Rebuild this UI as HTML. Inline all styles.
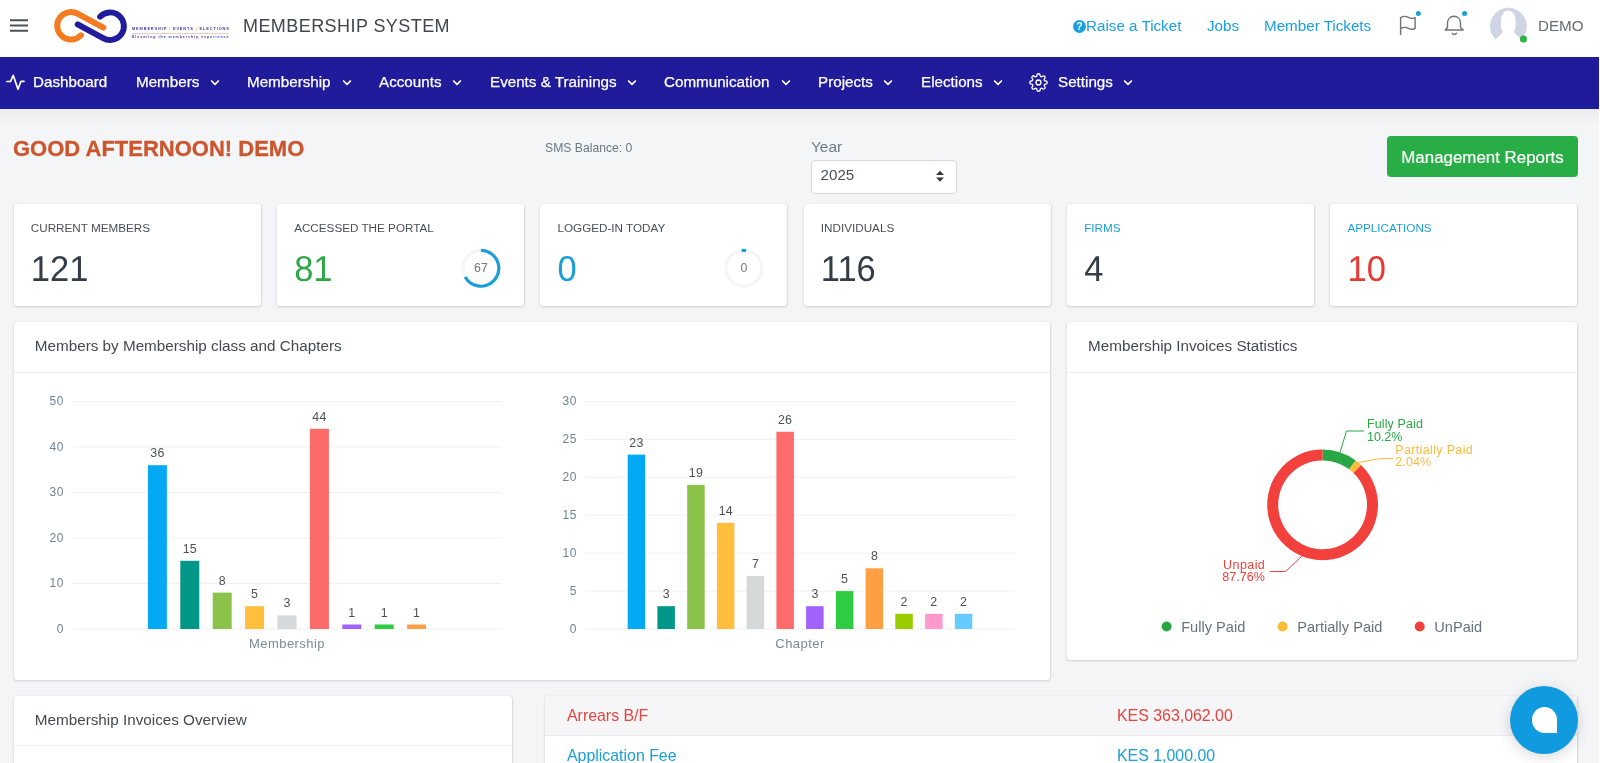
<!DOCTYPE html>
<html lang="en">
<head>
<meta charset="utf-8">
<title>Membership System</title>
<style>
*{box-sizing:border-box;margin:0;padding:0}
html,body{width:1600px;height:763px;overflow:hidden;background:#fff}
body{font-family:"Liberation Sans",Arial,sans-serif;color:#323a46;position:relative}
#page{position:absolute;left:0;top:0;width:1599px;height:763px;background:#f4f5f7;overflow:hidden;will-change:transform}
.abs{position:absolute;white-space:nowrap}
/* header */
#topbar{position:absolute;left:0;top:0;width:1599px;height:57px;background:#fff}
#nav{position:absolute;left:0;top:57px;width:1599px;height:51.5px;background:#1f1b9b}
#nav .it{position:absolute;top:0;height:52px;line-height:49px;color:#fff;font-size:15.2px;white-space:nowrap;-webkit-text-stroke:0.25px #fff}
#nav svg{position:absolute}
.toplink{position:absolute;top:17px;font-size:15.2px;color:#1a9fe0;white-space:nowrap;line-height:18px}
/* cards */
.card{position:absolute;background:#fff;border-radius:3px;box-shadow:0 1px 2.5px rgba(35,40,55,.16),.5px 0 1.5px rgba(35,40,55,.07)}
.stat .lbl{position:absolute;left:17.3px;top:17.1px;font-size:11.7px;color:#3e4650;white-space:nowrap;line-height:14px}
.stat .num{position:absolute;left:17.3px;top:45.9px;font-size:34.5px;line-height:40px;color:#343c46;font-weight:400;white-space:nowrap;transform:scaleY(1.04);transform-origin:0 31.4px;text-rendering:geometricPrecision}
.ctitle{position:absolute;left:21.3px;top:15.2px;font-size:15.25px;line-height:18px;color:#434a52;white-space:nowrap}
.chead{position:absolute;left:0;top:0;right:0;height:51px;border-bottom:1px solid #eff0f3}
</style>
</head>
<body>
<div id="page">

<!-- TOP BAR -->
<div id="topbar">
  <svg class="abs" style="left:10px;top:18px" width="18" height="15" viewBox="0 0 18 15">
    <g stroke="#4b5259" stroke-width="1.9" fill="none"><path d="M0 2.3H18M0 7.5H18M0 12.8H18"/></g>
  </svg>
  <!-- logo -->
  <svg class="abs" style="left:45px;top:0" width="195" height="56" viewBox="45 0 195 56">
    <g fill="none" stroke-width="5.9" stroke-linecap="round" stroke-linejoin="round">
      <path d="M103.4 27.7L78 13.9A13.8 13.8 0 1 0 81 35.3" stroke="#f47b20"/>
      <path d="M77.7 24.3L103.1 38.1A13.8 13.8 0 1 0 100.1 16.7" stroke="#211c9c"/>
    </g>
    <text x="132" y="30.4" font-family="Liberation Sans, sans-serif" font-size="3.9" font-weight="700" fill="#3d37a3" textLength="96.9">MEMBERSHIP <tspan fill="#f3b27a">|</tspan> EVENTS <tspan fill="#f3b27a">|</tspan> ELECTIONS</text>
    <path d="M132 33.3H229" stroke="#f6c79f" stroke-width="0.6"/><path d="M132 33.3H229" stroke="#6a5f8f" stroke-width="0.5" stroke-dasharray="1.4 1.1" opacity=".7"/>
    <text x="132" y="38.2" font-family="Liberation Sans, sans-serif" font-size="3.5" font-weight="700" fill="#3d37a3" textLength="96.4">Elevating the membership experience</text>
  </svg>
  <div class="abs" style="left:243px;top:15px;font-size:18px;letter-spacing:.43px;line-height:22px;color:#3f464e">MEMBERSHIP SYSTEM</div>

  <div class="toplink" style="left:1073px"><span style="display:inline-block;width:13px;height:13px;border-radius:50%;background:#1a9fe0;color:#fff;font-size:10.5px;font-weight:700;line-height:13px;text-align:center;vertical-align:1px">?</span>Raise a Ticket</div>
  <div class="toplink" style="left:1207px">Jobs</div>
  <div class="toplink" style="left:1264px">Member Tickets</div>

  <!-- flag -->
  <svg class="abs" style="left:1396px;top:8px" width="30" height="32" viewBox="0 0 30 32">
    <path d="M4.6 26.4V9.6C7.6 8 10.4 8.2 12.4 9.4C14.8 10.8 17.2 10.6 19.1 9.7V20.4C17 21.6 14.6 21.5 12.4 20.3C10.4 19.2 7.6 19 4.6 20.7" fill="none" stroke="#6c7278" stroke-width="1.4" stroke-linecap="round" stroke-linejoin="round"/>
    <circle cx="22.3" cy="5.6" r="2.5" fill="#1ba1d0"/>
  </svg>
  <!-- bell -->
  <svg class="abs" style="left:1440px;top:8px" width="32" height="32" viewBox="0 0 32 32">
    <g fill="none" stroke="#6c7278" stroke-width="1.4" stroke-linecap="round" stroke-linejoin="round">
    <path d="M5.2 22L7.5 19.6V15C7.5 11 10.2 8.3 14 8.3C17.8 8.3 20.5 11 20.5 15V19.6L23.2 22Z"/>
    <path d="M12.2 25.3C13.1 26.8 15.5 26.8 16.4 25.3"/>
    </g>
    <circle cx="24.6" cy="5.6" r="2.5" fill="#1ba1d0"/>
  </svg>
  <!-- avatar -->
  <svg class="abs" style="left:1488px;top:6px" width="42" height="46" viewBox="0 0 42 46">
    <circle cx="20.4" cy="20.2" r="18.4" fill="#d0d5e6"/>
    <path d="M13 14A7.3 9.5 0 0 1 27.6 14V21C27.6 23.5 26 24.4 26 25.5C26 26.5 26.5 27 27.3 27.8L36.5 36.5V46H4.5V36.5L13.3 27.8C14.1 27 14.6 26.5 14.6 25.5C14.6 24.4 13 23.5 13 21Z" fill="#fff"/>
    <circle cx="35.4" cy="33" r="3.5" fill="#2fb344"/>
  </svg>
  <div class="abs" style="left:1538px;top:17px;font-size:15.2px;line-height:18px;color:#666d74">DEMO</div>
</div>

<!-- NAV -->
<div id="nav">
  <svg style="left:5px;top:15px" width="22" height="20" viewBox="0 0 22 20"><path d="M1.9 9.5H5.5L8.2 3.3L13 17.2L16 9.3H19" fill="none" stroke="#fff" stroke-width="1.7" stroke-linecap="round" stroke-linejoin="round"/></svg>
  <div class="it" style="left:33px">Dashboard</div>
  <div class="it" style="left:136px">Members</div>
  <div class="it" style="left:247px">Membership</div>
  <div class="it" style="left:379px">Accounts</div>
  <div class="it" style="left:490px">Events &amp; Trainings</div>
  <div class="it" style="left:664px">Communication</div>
  <div class="it" style="left:818px">Projects</div>
  <div class="it" style="left:921px">Elections</div>
  <div class="it" style="left:1058px">Settings</div>
<svg style="left:209.0px;top:19.6px" width="12" height="12" viewBox="0 0 12 12"><path d="M2.6 4L6 7.4L9.4 4" fill="none" stroke="#fff" stroke-width="1.7" stroke-linecap="round" stroke-linejoin="round"/></svg><svg style="left:340.8px;top:19.6px" width="12" height="12" viewBox="0 0 12 12"><path d="M2.6 4L6 7.4L9.4 4" fill="none" stroke="#fff" stroke-width="1.7" stroke-linecap="round" stroke-linejoin="round"/></svg><svg style="left:450.7px;top:19.6px" width="12" height="12" viewBox="0 0 12 12"><path d="M2.6 4L6 7.4L9.4 4" fill="none" stroke="#fff" stroke-width="1.7" stroke-linecap="round" stroke-linejoin="round"/></svg><svg style="left:625.9px;top:19.6px" width="12" height="12" viewBox="0 0 12 12"><path d="M2.6 4L6 7.4L9.4 4" fill="none" stroke="#fff" stroke-width="1.7" stroke-linecap="round" stroke-linejoin="round"/></svg><svg style="left:779.6px;top:19.6px" width="12" height="12" viewBox="0 0 12 12"><path d="M2.6 4L6 7.4L9.4 4" fill="none" stroke="#fff" stroke-width="1.7" stroke-linecap="round" stroke-linejoin="round"/></svg><svg style="left:881.6px;top:19.6px" width="12" height="12" viewBox="0 0 12 12"><path d="M2.6 4L6 7.4L9.4 4" fill="none" stroke="#fff" stroke-width="1.7" stroke-linecap="round" stroke-linejoin="round"/></svg><svg style="left:991.5px;top:19.6px" width="12" height="12" viewBox="0 0 12 12"><path d="M2.6 4L6 7.4L9.4 4" fill="none" stroke="#fff" stroke-width="1.7" stroke-linecap="round" stroke-linejoin="round"/></svg><svg style="left:1121.6px;top:19.6px" width="12" height="12" viewBox="0 0 12 12"><path d="M2.6 4L6 7.4L9.4 4" fill="none" stroke="#fff" stroke-width="1.7" stroke-linecap="round" stroke-linejoin="round"/></svg><svg style="left:1029.2px;top:15.9px" width="19" height="19" viewBox="0 0 24 24"><g fill="none" stroke="#fff" stroke-width="1.7" stroke-linecap="round" stroke-linejoin="round"><circle cx="12" cy="12" r="3.1"/><path d="M19.4 15a1.65 1.65 0 0 0 .33 1.82l.06.06a2 2 0 1 1-2.83 2.83l-.06-.06a1.65 1.65 0 0 0-1.82-.33 1.65 1.65 0 0 0-1 1.51V21a2 2 0 1 1-4 0v-.09A1.65 1.65 0 0 0 9 19.4a1.65 1.65 0 0 0-1.82.33l-.06.06a2 2 0 1 1-2.83-2.83l.06-.06a1.65 1.65 0 0 0 .33-1.82 1.65 1.65 0 0 0-1.51-1H3a2 2 0 1 1 0-4h.09A1.65 1.65 0 0 0 4.6 9a1.65 1.65 0 0 0-.33-1.82l-.06-.06a2 2 0 1 1 2.83-2.83l.06.06a1.65 1.65 0 0 0 1.82.33H9a1.65 1.65 0 0 0 1-1.51V3a2 2 0 1 1 4 0v.09a1.65 1.65 0 0 0 1 1.51 1.65 1.65 0 0 0 1.82-.33l.06-.06a2 2 0 1 1 2.83 2.83l-.06.06a1.65 1.65 0 0 0-.33 1.82V9a1.65 1.65 0 0 0 1.51 1H21a2 2 0 1 1 0 4h-.09a1.65 1.65 0 0 0-1.51 1z"/></g></svg></div>

<div style="position:absolute;left:0;top:108.5px;width:1599px;height:16px;background:linear-gradient(rgba(40,40,60,.045),rgba(40,40,60,0))"></div>

<div class="abs" style="left:13px;top:136.7px;font-size:22px;line-height:24px;font-weight:700;color:#cb562e;-webkit-text-stroke:.3px #cb562e;transform:scaleY(1.035);transform-origin:0 19.3px">GOOD AFTERNOON! DEMO</div>
<div class="abs" style="left:545px;top:141px;font-size:12.2px;line-height:14px;color:#6b7884">SMS Balance: 0</div>
<div class="abs" style="left:811px;top:137.5px;font-size:15.4px;line-height:18px;color:#6a7d8a">Year</div>
<div class="abs" style="left:811px;top:159.5px;width:145.5px;height:34px;background:#fff;border:1px solid #d3d9df;border-radius:4px">
  <div class="abs" style="left:8.5px;top:5px;font-size:15.2px;line-height:18px;color:#495057">2025</div>
  <svg class="abs" style="left:122.5px;top:9.5px" width="10" height="13" viewBox="0 0 10 13"><path d="M1 5L5 0.8L9 5ZM1 7.6L5 11.8L9 7.6Z" fill="#343a40"/></svg>
</div>
<div class="abs" style="left:1387px;top:136px;width:191px;height:41px;background:#29ad46;border-radius:4px;color:#fff;font-size:16.9px;line-height:43.4px;-webkit-text-stroke:.2px #fff;text-align:center">Management Reports</div>

<div class="card stat" style="left:13.50px;top:204.2px;width:247.3px;height:102.2px"><div class="lbl" style="color:#484f57">CURRENT MEMBERS</div><div class="num" style="color:#343c46">121</div></div>
<div class="card stat" style="left:276.83px;top:204.2px;width:247.3px;height:102.2px"><div class="lbl" style="color:#484f57">ACCESSED THE PORTAL</div><div class="num" style="color:#2fa84a">81</div><svg class="abs" style="left:0;top:0" width="247" height="102" viewBox="0 0 247 102"><circle cx="203.9" cy="64.3" r="17.9" fill="none" stroke="#f6f6f7" stroke-width="3.2"/><path d="M203.9 46.4A17.9 17.9 0 1 1 188.21 72.92" fill="none" stroke="#1b9fd8" stroke-width="3.2"/><text x="203.9" y="67.89999999999999" text-anchor="middle" font-family="Liberation Sans, sans-serif" font-size="12.3" fill="#757a80">67</text></svg></div>
<div class="card stat" style="left:540.17px;top:204.2px;width:247.3px;height:102.2px"><div class="lbl" style="color:#484f57">LOGGED-IN TODAY</div><div class="num" style="color:#1b9fd8">0</div><svg class="abs" style="left:0;top:0" width="247" height="102" viewBox="0 0 247 102"><circle cx="203.9" cy="64.3" r="17.9" fill="none" stroke="#f6f6f7" stroke-width="3.2"/><path d="M201.66 46.54A17.9 17.9 0 0 1 206.14 46.54" fill="none" stroke="#1b9fd8" stroke-width="3.2"/><text x="203.9" y="67.89999999999999" text-anchor="middle" font-family="Liberation Sans, sans-serif" font-size="12.3" fill="#757a80">0</text></svg></div>
<div class="card stat" style="left:803.50px;top:204.2px;width:247.3px;height:102.2px"><div class="lbl" style="color:#484f57">INDIVIDUALS</div><div class="num" style="color:#343c46">116</div></div>
<div class="card stat" style="left:1066.83px;top:204.2px;width:247.3px;height:102.2px"><div class="lbl" style="color:#1b9fd8">FIRMS</div><div class="num" style="color:#343c46">4</div></div>
<div class="card stat" style="left:1330.17px;top:204.2px;width:247.3px;height:102.2px"><div class="lbl" style="color:#1b9fd8">APPLICATIONS</div><div class="num" style="color:#e53a35">10</div></div>

<div class="card" style="left:13.5px;top:321.7px;width:1036.7px;height:358.5px"><div class="chead"></div><div class="ctitle">Members by Membership class and Chapters</div></div>
<div class="card" style="left:1066.8px;top:321.7px;width:510.7px;height:338.8px"><div class="chead"></div><div class="ctitle">Membership Invoices Statistics</div></div>
<svg class="abs" style="left:0;top:0" width="1599" height="763" viewBox="0 0 1599 763" font-family="Liberation Sans, sans-serif">
<path d="M72.5 629.0H501.5" stroke="#f0f1f3" stroke-width="1"/><text x="64.2" y="632.5" text-anchor="end" font-size="12" letter-spacing=".7" fill="#6f8393">0</text><path d="M72.5 583.5H501.5" stroke="#f0f1f3" stroke-width="1"/><text x="64.2" y="587.0" text-anchor="end" font-size="12" letter-spacing=".7" fill="#6f8393">10</text><path d="M72.5 538.0H501.5" stroke="#f0f1f3" stroke-width="1"/><text x="64.2" y="541.5" text-anchor="end" font-size="12" letter-spacing=".7" fill="#6f8393">20</text><path d="M72.5 492.5H501.5" stroke="#f0f1f3" stroke-width="1"/><text x="64.2" y="496.0" text-anchor="end" font-size="12" letter-spacing=".7" fill="#6f8393">30</text><path d="M72.5 447.0H501.5" stroke="#f0f1f3" stroke-width="1"/><text x="64.2" y="450.5" text-anchor="end" font-size="12" letter-spacing=".7" fill="#6f8393">40</text><path d="M72.5 401.5H501.5" stroke="#f0f1f3" stroke-width="1"/><text x="64.2" y="405.0" text-anchor="end" font-size="12" letter-spacing=".7" fill="#6f8393">50</text><rect x="147.9" y="465.2" width="19" height="163.8" fill="#03a9f3"/><text x="157.4" y="457.2" text-anchor="middle" font-size="12.4" letter-spacing=".15" fill="#4d5258">36</text><rect x="180.3" y="560.8" width="19" height="68.2" fill="#009788"/><text x="189.8" y="552.8" text-anchor="middle" font-size="12.4" letter-spacing=".15" fill="#4d5258">15</text><rect x="212.7" y="592.6" width="19" height="36.4" fill="#8bc34a"/><text x="222.2" y="584.6" text-anchor="middle" font-size="12.4" letter-spacing=".15" fill="#4d5258">8</text><rect x="245.1" y="606.2" width="19" height="22.8" fill="#ffbf3c"/><text x="254.6" y="598.2" text-anchor="middle" font-size="12.4" letter-spacing=".15" fill="#4d5258">5</text><rect x="277.5" y="615.4" width="19" height="13.7" fill="#d6d9da"/><text x="287.0" y="607.4" text-anchor="middle" font-size="12.4" letter-spacing=".15" fill="#4d5258">3</text><rect x="309.9" y="428.8" width="19" height="200.2" fill="#ff6b6b"/><text x="319.4" y="420.8" text-anchor="middle" font-size="12.4" letter-spacing=".15" fill="#4d5258">44</text><rect x="342.3" y="624.5" width="19" height="4.5" fill="#a162ff"/><text x="351.8" y="616.5" text-anchor="middle" font-size="12.4" letter-spacing=".15" fill="#4d5258">1</text><rect x="374.7" y="624.5" width="19" height="4.5" fill="#2ecc40"/><text x="384.2" y="616.5" text-anchor="middle" font-size="12.4" letter-spacing=".15" fill="#4d5258">1</text><rect x="407.1" y="624.5" width="19" height="4.5" fill="#ff9f43"/><text x="416.6" y="616.5" text-anchor="middle" font-size="12.4" letter-spacing=".15" fill="#4d5258">1</text><text x="287.0" y="647.5" text-anchor="middle" font-size="13" letter-spacing=".45" fill="#788a99">Membership</text>
<path d="M585.5 629.0H1014.5" stroke="#f0f1f3" stroke-width="1"/><text x="577.2" y="632.5" text-anchor="end" font-size="12" letter-spacing=".7" fill="#6f8393">0</text><path d="M585.5 591.1H1014.5" stroke="#f0f1f3" stroke-width="1"/><text x="577.2" y="594.6" text-anchor="end" font-size="12" letter-spacing=".7" fill="#6f8393">5</text><path d="M585.5 553.2H1014.5" stroke="#f0f1f3" stroke-width="1"/><text x="577.2" y="556.7" text-anchor="end" font-size="12" letter-spacing=".7" fill="#6f8393">10</text><path d="M585.5 515.2H1014.5" stroke="#f0f1f3" stroke-width="1"/><text x="577.2" y="518.8" text-anchor="end" font-size="12" letter-spacing=".7" fill="#6f8393">15</text><path d="M585.5 477.3H1014.5" stroke="#f0f1f3" stroke-width="1"/><text x="577.2" y="480.8" text-anchor="end" font-size="12" letter-spacing=".7" fill="#6f8393">20</text><path d="M585.5 439.4H1014.5" stroke="#f0f1f3" stroke-width="1"/><text x="577.2" y="442.9" text-anchor="end" font-size="12" letter-spacing=".7" fill="#6f8393">25</text><path d="M585.5 401.5H1014.5" stroke="#f0f1f3" stroke-width="1"/><text x="577.2" y="405.0" text-anchor="end" font-size="12" letter-spacing=".7" fill="#6f8393">30</text><rect x="627.7" y="454.6" width="17.5" height="174.4" fill="#03a9f3"/><text x="636.4" y="446.6" text-anchor="middle" font-size="12.4" letter-spacing=".15" fill="#4d5258">23</text><rect x="657.4" y="606.2" width="17.5" height="22.8" fill="#009788"/><text x="666.2" y="598.2" text-anchor="middle" font-size="12.4" letter-spacing=".15" fill="#4d5258">3</text><rect x="687.2" y="484.9" width="17.5" height="144.1" fill="#8bc34a"/><text x="695.9" y="476.9" text-anchor="middle" font-size="12.4" letter-spacing=".15" fill="#4d5258">19</text><rect x="716.9" y="522.8" width="17.5" height="106.2" fill="#ffbf3c"/><text x="725.7" y="514.8" text-anchor="middle" font-size="12.4" letter-spacing=".15" fill="#4d5258">14</text><rect x="746.6" y="575.9" width="17.5" height="53.1" fill="#d6d9da"/><text x="755.4" y="567.9" text-anchor="middle" font-size="12.4" letter-spacing=".15" fill="#4d5258">7</text><rect x="776.4" y="431.8" width="17.5" height="197.2" fill="#ff6b6b"/><text x="785.1" y="423.8" text-anchor="middle" font-size="12.4" letter-spacing=".15" fill="#4d5258">26</text><rect x="806.1" y="606.2" width="17.5" height="22.8" fill="#a162ff"/><text x="814.9" y="598.2" text-anchor="middle" font-size="12.4" letter-spacing=".15" fill="#4d5258">3</text><rect x="835.9" y="591.1" width="17.5" height="37.9" fill="#2ecc40"/><text x="844.6" y="583.1" text-anchor="middle" font-size="12.4" letter-spacing=".15" fill="#4d5258">5</text><rect x="865.6" y="568.3" width="17.5" height="60.7" fill="#ff9f43"/><text x="874.4" y="560.3" text-anchor="middle" font-size="12.4" letter-spacing=".15" fill="#4d5258">8</text><rect x="895.3" y="613.8" width="17.5" height="15.2" fill="#99cc00"/><text x="904.1" y="605.8" text-anchor="middle" font-size="12.4" letter-spacing=".15" fill="#4d5258">2</text><rect x="925.1" y="613.8" width="17.5" height="15.2" fill="#ff99cc"/><text x="933.8" y="605.8" text-anchor="middle" font-size="12.4" letter-spacing=".15" fill="#4d5258">2</text><rect x="954.8" y="613.8" width="17.5" height="15.2" fill="#66ccff"/><text x="963.6" y="605.8" text-anchor="middle" font-size="12.4" letter-spacing=".15" fill="#4d5258">2</text><text x="800.0" y="647.5" text-anchor="middle" font-size="13" letter-spacing=".45" fill="#788a99">Chapter</text>
<path d="M1322.60 449.40A55.4 55.4 0 0 1 1355.72 460.39L1349.15 469.21A44.4 44.4 0 0 0 1322.60 460.40Z" fill="#28a745"/><path d="M1355.72 460.39A55.4 55.4 0 0 1 1361.13 464.99L1353.48 472.90A44.4 44.4 0 0 0 1349.15 469.21Z" fill="#fbbc3a"/><path d="M1361.13 464.99A55.4 55.4 0 1 1 1322.60 449.40L1322.60 460.40A44.4 44.4 0 1 0 1353.48 472.90Z" fill="#f2403c"/><path d="M1340.1 452.2L1346.5 431H1364" fill="none" stroke="#28a745" stroke-width="1"/><path d="M1358.5 462.6L1380.5 458.5H1393" fill="none" stroke="#fbbc3a" stroke-width="1"/><path d="M1301.8 556.2L1285.5 571.5H1269.5" fill="none" stroke="#f2403c" stroke-width="1"/><g font-size="12.5"><text x="1367" y="428" fill="#28a745" textLength="55.9">Fully Paid</text><text x="1367" y="440.6" fill="#28a745" textLength="35.4">10.2%</text><text x="1395.3" y="453.8" fill="#fbbc3a" textLength="77.4">Partially Paid</text><text x="1395.3" y="466.4" fill="#fbbc3a" textLength="35.9">2.04%</text><text x="1223.1" y="568.6" fill="#f2403c" textLength="41.7">Unpaid</text><text x="1222.3" y="581.2" fill="#f2403c" textLength="42.5">87.76%</text></g><g font-size="14.6" fill="#65737f"><circle cx="1166.6" cy="626.5" r="5" fill="#28a745"/><text x="1181.1999999999998" y="631.6">Fully Paid</text><circle cx="1282.6" cy="626.5" r="5" fill="#fbbc3a"/><text x="1297.1999999999998" y="631.6">Partially Paid</text><circle cx="1419.7" cy="626.5" r="5" fill="#f2403c"/><text x="1434.3" y="631.6">UnPaid</text></g>
</svg>


<div class="card" style="left:13.5px;top:696px;width:498.7px;height:90px"><div class="chead" style="height:50px"></div><div class="ctitle" style="top:15px">Membership Invoices Overview</div></div>
<div class="card" style="left:545px;top:696px;width:1032px;height:90px;overflow:hidden">
  <div style="position:absolute;left:0;top:0;right:0;height:39.5px;background:#f6f6f8;border-bottom:1px solid #e9ebef"></div>
  <div class="abs" style="left:22px;top:10px;font-size:15.9px;line-height:19px;color:#e3453f">Arrears B/F</div>
  <div class="abs" style="left:572px;top:10px;font-size:15.9px;line-height:19px;color:#e3453f">KES 363,062.00</div>
  <div class="abs" style="left:22px;top:50px;font-size:15.9px;line-height:19px;color:#1b9fd8">Application Fee</div>
  <div class="abs" style="left:572px;top:50px;font-size:15.9px;line-height:19px;color:#1b9fd8">KES 1,000.00</div>
</div>
<div class="abs" style="left:1510px;top:686px;width:68px;height:68px;border-radius:50%;background:#109be0;box-shadow:0 3px 14px rgba(0,0,0,.16)">
  <div style="position:absolute;left:21.7px;top:21.3px;width:25.3px;height:25.6px;background:#fff;border-radius:50% 50% 0 50%"></div>
</div>


</div>
</body>
</html>
